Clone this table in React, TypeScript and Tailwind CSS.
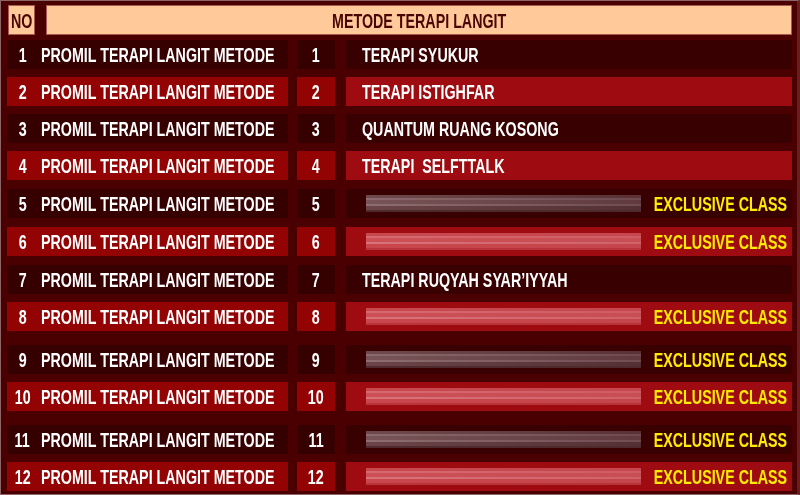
import React from 'react';

type Row = { no: number; title?: string; gap: string };

const rows: Row[] = [
  { no: 1, title: 'TERAPI SYUKUR', gap: 'mt-[5px]' },
  { no: 2, title: 'TERAPI ISTIGHFAR', gap: 'mt-[8px]' },
  { no: 3, title: 'QUANTUM RUANG KOSONG', gap: 'mt-[8px]' },
  { no: 4, title: 'TERAPI  SELFTTALK', gap: 'mt-[8px]' },
  { no: 5, gap: 'mt-[9px]' },
  { no: 6, gap: 'mt-[9px]' },
  { no: 7, title: 'TERAPI RUQYAH SYAR\u2019IYYAH', gap: 'mt-[9px]' },
  { no: 8, gap: 'mt-[8px]' },
  { no: 9, gap: 'mt-[14px]' },
  { no: 10, gap: 'mt-[8px]' },
  { no: 11, gap: 'mt-[14px]' },
  { no: 12, gap: 'mt-[8px]' },
];

function BlurBar({ bright }: { bright: boolean }) {
  return (
    <div className="w-[275px] h-[17px] ml-[20px] shrink-0 flex flex-col blur-[0.6px] overflow-hidden">
      <div className={bright ? 'h-[3px] bg-gradient-to-r from-[#c8484e] to-[#c4484e]' : 'h-[3px] bg-gradient-to-r from-[#6e4a4c] to-[#5a3236]'} />
      <div className={bright ? 'h-[2px] bg-gradient-to-r from-[#d66a70] to-[#cf5c62]' : 'h-[2px] bg-gradient-to-r from-[#8a6a6c] to-[#6e4a4e]'} />
      <div className={bright ? 'h-[4px] bg-gradient-to-r from-[#cc5056] to-[#c64e54]' : 'h-[4px] bg-gradient-to-r from-[#785456] to-[#603a3e]'} />
      <div className={bright ? 'h-[2px] bg-gradient-to-r from-[#d8737a] to-[#d06268]' : 'h-[2px] bg-gradient-to-r from-[#8e6e70] to-[#704c50]'} />
      <div className={bright ? 'h-[4px] bg-gradient-to-r from-[#c8464c] to-[#c4464c]' : 'h-[4px] bg-gradient-to-r from-[#6a4446] to-[#543034]'} />
      <div className={bright ? 'h-[2px] bg-[#b8343a]' : 'h-[2px] bg-[#4e2a2c]'} />
    </div>
  );
}

export default function App() {
  return (
    <div
      className="w-[800px] h-[495px] bg-[#4a0000] border border-[#8c6666] border-r-[3px] border-r-[#6b1c1c] pl-[6px] pt-[4px] overflow-hidden text-white font-bold text-[21px] leading-none"
      style={{ fontFamily: '"Liberation Sans", Arial, sans-serif' }}
    >
      <div className="flex h-[30px] text-[#4a0505]">
        <div className="w-[27px] ml-[1px] bg-[#ffc999] border border-[#a8584c] flex items-center justify-center">
          <span className="inline-block whitespace-nowrap scale-x-[0.68]">NO</span>
        </div>
        <div className="w-[746px] ml-[11px] bg-[#ffc999] border border-[#a8584c] flex items-center justify-center">
          <span className="inline-block whitespace-nowrap scale-x-[0.68]">METODE TERAPI LANGIT</span>
        </div>
      </div>

      {rows.map((r) => {
        const bright = r.no % 2 === 0;
        const leftBg = bright ? 'bg-[#930303]' : 'bg-[#370000]';
        const rightBg = bright ? 'bg-[#9e0b10]' : 'bg-[#390002]';
        return (
          <div key={r.no} className={`flex h-[29px] ${r.gap}`}>
            <div className={`w-[281px] flex items-center ${leftBg}`}>
              <span className="w-[31px] shrink-0 text-center">
                <span className="inline-block scale-x-[0.68]">{r.no}</span>
              </span>
              <span className="ml-[3px] shrink-0 inline-block whitespace-nowrap origin-left scale-x-[0.68]">
                PROMIL TERAPI LANGIT METODE
              </span>
            </div>
            <div className={`w-[38px] ml-[9px] flex items-center justify-center ${leftBg}`}>
              <span className="inline-block scale-x-[0.68]">{r.no}</span>
            </div>
            <div className={`w-[446px] ml-[11px] flex items-center ${rightBg}`}>
              {r.title ? (
                <span className="ml-[16px] shrink-0 inline-block whitespace-pre origin-left scale-x-[0.68]">{r.title}</span>
              ) : (
                <>
                  <BlurBar bright={bright} />
                  <div className="w-[134px] ml-auto mr-[5px] flex justify-end">
                    <span className="shrink-0 inline-block whitespace-nowrap origin-right scale-x-[0.68] text-[#ffec00]">
                      EXCLUSIVE CLASS
                    </span>
                  </div>
                </>
              )}
            </div>
          </div>
        );
      })}
    </div>
  );
}
